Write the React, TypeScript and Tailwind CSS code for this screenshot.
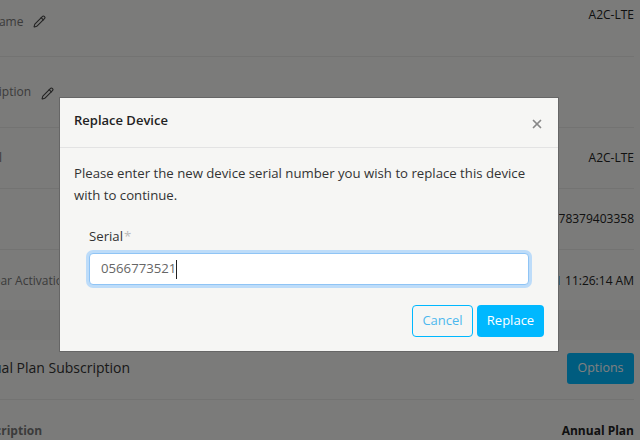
import { Pencil, X } from 'lucide-react';

const rows = [
  { label: 'Tag Name', value: 'A2C-LTE', edit: true, h: 'h-[57px]', labelClass: 'pt-[13px]', iconClass: '-mt-[2px]', valueClass: '' },
  { label: 'Description', value: '', edit: true, h: 'h-[71px]', labelClass: 'pt-[26px]', iconClass: 'mt-[2px]', valueClass: '' },
  { label: 'Model', value: 'A2C-LTE', edit: false, h: 'h-[61px]', labelClass: 'pt-[21px]', iconClass: '', valueClass: 'pt-[21px]' },
  { label: 'Serial', value: '89148000005378379403358', edit: false, h: 'h-[61px]', labelClass: 'pt-[21px]', iconClass: '', valueClass: 'pt-[21px]' },
  { label: '1st Year Activation', value: '8/12/2021 11:26:14 AM', edit: false, h: 'h-[61px]', labelClass: 'pt-[22px]', iconClass: '', valueClass: 'pt-[22px]' },
];

export default function App() {
  return (
    <div className="relative h-[440px] w-[640px] overflow-hidden bg-[#f6f6f4] font-['Open_Sans','Noto_Sans',sans-serif] text-[12px]">
      <div className="ml-[-33px] mr-[6px]">
        {rows.map((row) => (
          <div key={row.label} className={`flex items-start justify-between border-b border-[#e6e6e4] ${row.h}`}>
            <div className={`flex items-center gap-[10px] text-[#777] ${row.labelClass}`}>
              <span>{row.label}</span>
              {row.edit && <Pencil className={`h-[13px] w-[13px] text-[#444] ${row.iconClass}`} strokeWidth={2} />}
            </div>
            <span className={`pt-[6px] text-[#222] ${row.valueClass}`}>{row.value}</span>
          </div>
        ))}
        <div className="h-[30px] -mr-[6px] mt-[-1px] bg-[#f1f1ef]" />
        <div className="h-[13px]" />
        <div className="flex h-[47px] items-start justify-between border-b border-[#e6e6e4]">
          <span className="pt-[4px] text-[14px] text-[#333]">Annual Plan Subscription</span>
          <button className="h-[31px] w-[67px] rounded-[3px] bg-[#00b8ff] text-[12.5px] text-white">Options</button>
        </div>
        <div className="flex justify-between pt-[22px] font-bold text-[#222]">
          <span className="text-[#777]">Subscription</span>
          <span>Annual Plan</span>
        </div>
      </div>

      <div className="absolute inset-0 bg-black/50 pl-[59px] pt-[97px]">
        <div className="h-[255px] w-[500px] border border-[#666] bg-[#f6f6f4] text-[#333]">
          <div className="flex h-[50px] items-start justify-between border-b border-[#e3e3e3] px-[14px]">
            <h2 className="pt-[12px] text-[13px] font-semibold leading-[20px] text-[#222]">Replace Device</h2>
            <X className="mt-[19px] h-[14px] w-[14px] text-[#888]" strokeWidth={3} />
          </div>
          <div className="px-[14px] pt-[14px]">
            <p className="text-[13.2px] leading-[22px]">
              Please enter the new device serial number you wish to replace this device with to continue.
            </p>
            <div className="mx-[15px] mt-[20px]">
              <label className="block text-[13.2px] leading-[20px] text-[#333]">
                Serial<span className="ml-[1px] text-[#bbb]">*</span>
              </label>
              <div className="mt-[7px] flex h-[32px] items-center rounded-[4px] border border-[#8fc4f5] bg-white px-[11px] text-[13.2px] text-[#666] shadow-[0_0_0_3px_#bddcf9]">
                <span>0566773521</span>
                <span className="h-[19px] w-px bg-[#222]" />
              </div>
            </div>
            <div className="mt-[20px] flex justify-end gap-[4px]">
              <button className="h-[32px] w-[61px] rounded-[4px] border border-[#00b8ff] text-[13px] text-[#4db8ee]">Cancel</button>
              <button className="h-[32px] w-[67px] rounded-[4px] bg-[#00b8ff] text-[13px] text-white">Replace</button>
            </div>
          </div>
        </div>
      </div>
    </div>
  );
}
